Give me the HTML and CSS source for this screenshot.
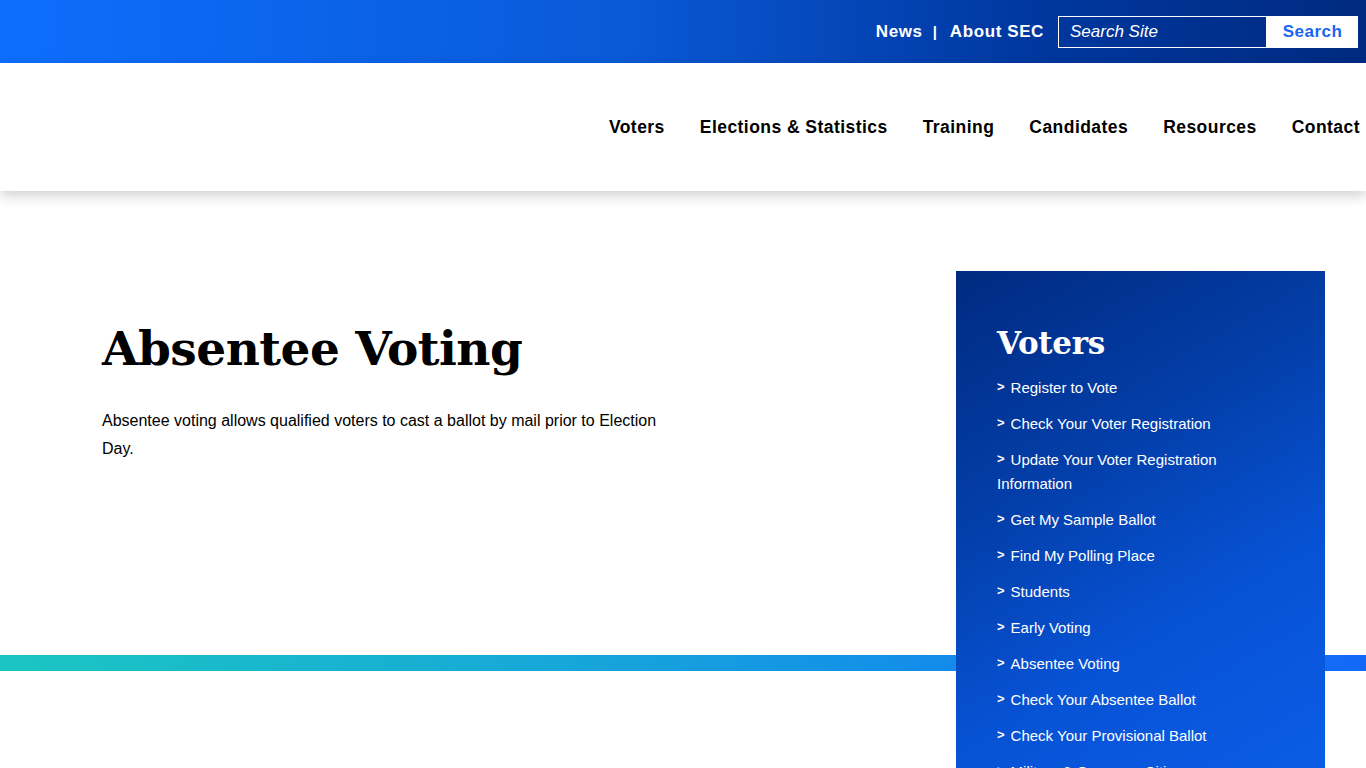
FILE: index.html
```html
<!DOCTYPE html>
<html lang="en">
<head>
<meta charset="utf-8">
<title>Absentee Voting</title>
<link rel="stylesheet" href="styles.css">
</head>
<body>
<div class="topbar">
  <a class="toplink" href="#">News</a>
  <span class="sep">|</span>
  <a class="toplink" href="#">About SEC</a>
  <form class="search">
    <input class="search-input" type="text" placeholder="Search Site">
    <button class="search-btn" type="button">Search</button>
  </form>
</div>
<header class="header">
  <nav class="nav">
    <a href="#">Voters</a>
    <a href="#">Elections &amp; Statistics</a>
    <a href="#">Training</a>
    <a href="#">Candidates</a>
    <a href="#">Resources</a>
    <a href="#">Contact</a>
  </nav>
</header>
<section class="content">
  <main class="main">
    <h1 class="title">Absentee Voting</h1>
    <p class="lead">Absentee voting allows qualified voters to cast a ballot by mail prior to Election Day.</p>
  </main>
  <aside class="sidebar">
    <h2 class="side-title">Voters</h2>
    <ul class="side-list">
      <li><a href="#">Register to Vote</a></li>
      <li><a href="#">Check Your Voter Registration</a></li>
      <li><a href="#">Update Your Voter Registration Information</a></li>
      <li><a href="#">Get My Sample Ballot</a></li>
      <li><a href="#">Find My Polling Place</a></li>
      <li><a href="#">Students</a></li>
      <li><a href="#">Early Voting</a></li>
      <li><a href="#">Absentee Voting</a></li>
      <li><a href="#">Check Your Absentee Ballot</a></li>
      <li><a href="#">Check Your Provisional Ballot</a></li>
      <li><a href="#">Military &amp; Overseas Citizens</a></li>
    </ul>
  </aside>
</section>
<div class="stripe"></div>
<div class="below"></div>
</body>
</html>
```
FILE: styles.css
```css
* { box-sizing: border-box; }
html, body { margin: 0; padding: 0; }
body {
  font-family: "Liberation Sans", Arial, sans-serif;
  background: #fff;
  overflow: hidden;
  height: 768px;
}
a { text-decoration: none; color: inherit; }

.topbar {
  height: 63px;
  background: linear-gradient(90deg, #0d6efd 0%, #0a5ad8 45%, #0038a0 75%, #002a80 100%);
  display: flex;
  align-items: center;
  justify-content: flex-end;
  padding-right: 8px;
}
.toplink {
  color: #fff;
  font-weight: bold;
  font-size: 17px;
  letter-spacing: 0.6px;
}
.sep {
  color: #fff;
  font-size: 15px;
  font-weight: bold;
  margin: 0 13px 0 10px;
}
.search {
  display: flex;
  margin-left: 14px;
  height: 32px;
}
.search-input {
  width: 209px;
  height: 32px;
  background: transparent;
  border: 1px solid #fff;
  color: #fff;
  font-family: "Liberation Sans", Arial, sans-serif;
  font-style: italic;
  font-size: 17px;
  padding: 0 11px;
  outline: none;
}
.search-input::placeholder { color: #fff; opacity: 1; }
.search-btn {
  width: 91px;
  height: 32px;
  background: #fff;
  border: 0;
  color: #1a66f0;
  font-family: "Liberation Sans", Arial, sans-serif;
  font-weight: bold;
  font-size: 17px;
  letter-spacing: 0.5px;
  padding: 0;
}

.header {
  height: 128px;
  background: #fff;
  box-shadow: 0 5px 12px rgba(0, 0, 0, 0.18);
  display: flex;
  align-items: center;
  justify-content: flex-end;
  position: relative;
  z-index: 2;
}
.nav {
  display: flex;
  gap: 35px;
  margin-right: 6px;
}
.nav a {
  color: #000;
  font-weight: bold;
  font-size: 17.5px;
  letter-spacing: 0.45px;
}

.content {
  height: 464px;
  display: flex;
  align-items: flex-start;
  justify-content: space-between;
}
.main {
  padding: 128px 0 0 102px;
  width: 680px;
}
.title {
  font-family: "DejaVu Serif", Georgia, serif;
  font-weight: bold;
  font-size: 47px;
  line-height: 60px;
  margin: 0 0 28px 0;
  color: #000;
  letter-spacing: -0.5px;
}
.lead {
  font-size: 16px;
  line-height: 28px;
  margin: 0;
  color: #000;
  width: 570px;
}
.sidebar {
  width: 369px;
  height: 520px;
  margin: 80px 41px 0 0;
  background: linear-gradient(150deg, #002a80 0%, #033ea8 35%, #0752d4 65%, #0b5ee8 100%);
  padding: 52px 88px 0 41px;
  position: relative;
  z-index: 1;
  color: #fff;
}
.side-title {
  font-family: "DejaVu Serif", Georgia, serif;
  font-weight: bold;
  font-size: 31px;
  line-height: 40px;
  margin: 0 0 13px 0;
  letter-spacing: -0.3px;
}
.side-list {
  list-style: none;
  margin: 0;
  padding: 0;
}
.side-list li {
  font-size: 15px;
  line-height: 24px;
  margin-bottom: 12px;
}
.side-list li::before {
  content: ">";
  font-weight: bold;
  font-size: 13px;
  line-height: 1;
  margin-right: 6px;
  position: relative;
  top: -2px;
}

.stripe {
  height: 16px;
  background: linear-gradient(90deg, #1bc6c2 0%, #17a8d8 40%, #1390e8 65%, #1368f8 100%);
}
.below { height: 97px; background: #fff; }
```
